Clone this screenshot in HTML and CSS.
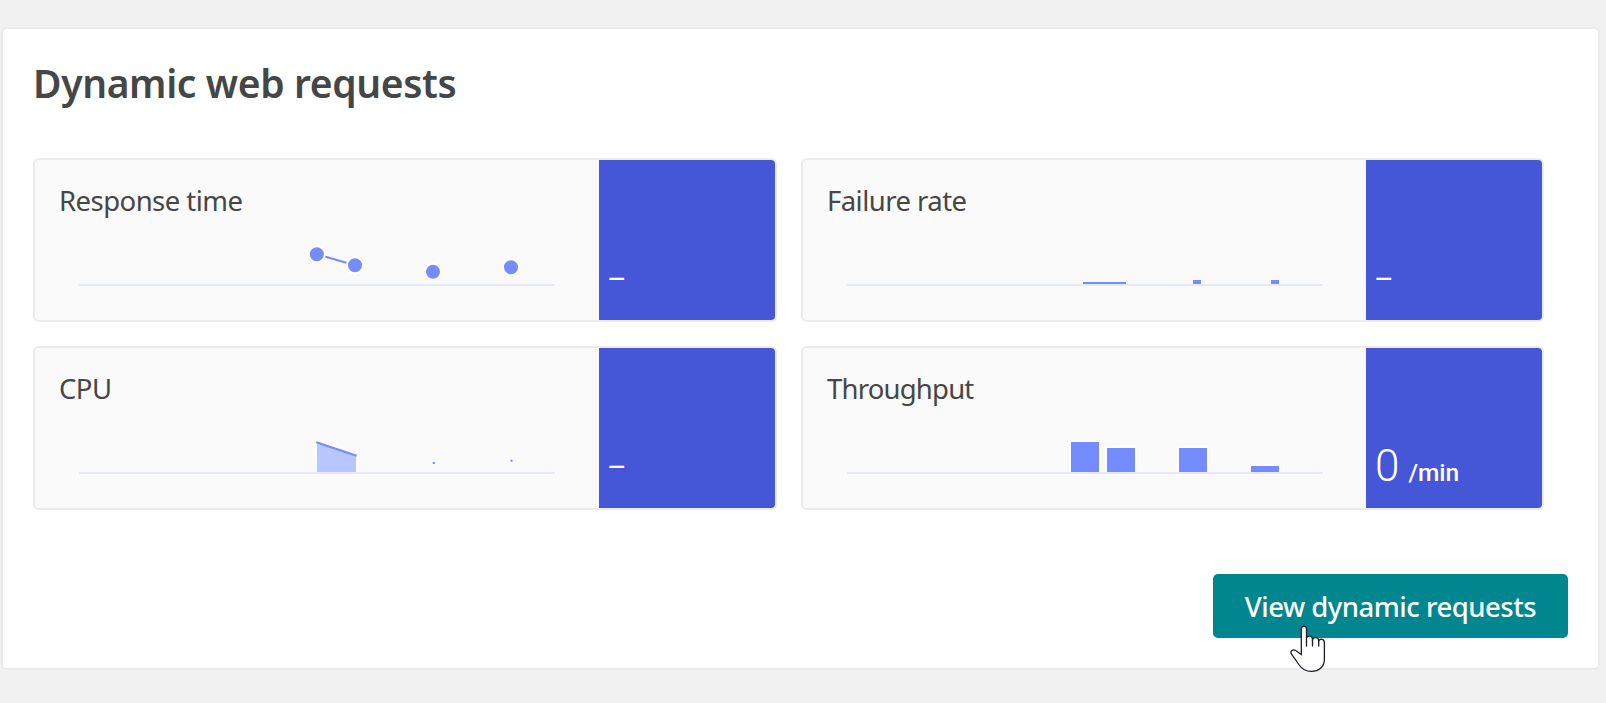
FILE: index.html
```html
<!DOCTYPE html>
<html lang="en">
<head>
<meta charset="utf-8">
<title>Dynamic web requests</title>
<link rel="stylesheet" href="styles.css">
</head>
<body>
<main class="card">
  <h1 class="card-title">Dynamic web requests</h1>
  <div class="tiles">
    <section class="tile">
      <div class="tile-main">
        <h2 class="tile-title">Response time</h2>
        <svg class="chart" viewBox="44 84 476 50">
          <path class="axis" d="M44 125H520"/>
          <path class="line" d="M282 94.2L320 105.3"/>
          <g class="dots">
            <circle cx="281.8" cy="94.2" r="8"/>
            <circle cx="320" cy="105.3" r="8"/>
            <circle cx="398" cy="111.8" r="8"/>
            <circle cx="476" cy="107.3" r="8"/>
          </g>
        </svg>
      </div>
      <div class="tile-value no-data"><span class="number">–</span></div>
    </section>
    <section class="tile">
      <div class="tile-main">
        <h2 class="tile-title">Failure rate</h2>
        <svg class="chart" viewBox="44 84 476 50">
          <path class="axis" d="M44 125H520"/>
          <path class="line" d="M280 123H323"/>
          <path class="fill" d="M390 120h8v4h-8zM468 120h8v4h-8z"/>
        </svg>
      </div>
      <div class="tile-value no-data"><span class="number">–</span></div>
    </section>
    <section class="tile">
      <div class="tile-main">
        <h2 class="tile-title">CPU</h2>
        <svg class="chart" viewBox="44 84 476 50">
          <path class="axis" d="M44 125H520"/>
          <path class="area" d="M282 94.5L321 107.5V124H282z"/>
          <path class="line" d="M281.3 94.3L321.7 107.7"/>
          <path class="fill" d="M397.8 114h2v2h-2zM475.5 111.7h2v2h-2z"/>
        </svg>
      </div>
      <div class="tile-value no-data"><span class="number">–</span></div>
    </section>
    <section class="tile">
      <div class="tile-main">
        <h2 class="tile-title tight">Throughput</h2>
        <svg class="chart" viewBox="44 84 476 50">
          <path class="halo" d="M266 92h32v32h-32zM302 98h32v26h-32zM374 98h32v26h-32zM446 116h32v8h-32z"/>
          <path class="axis" d="M44 125H520"/>
          <path class="fill" d="M268 94h28v30h-28zM304 100h28v24h-28zM376 100h28v24h-28zM448 118h28v6h-28z"/>
        </svg>
      </div>
      <div class="tile-value"><span class="number">0</span><span class="unit">/min</span></div>
    </section>
  </div>
  <div class="actions">
    <button class="button" type="button">View dynamic requests</button>
  </div>
</main>
<svg class="cursor" viewBox="0 0 36 48">
  <path d="M11.3 29.5V4.2C11.3 .2 16.5 .2 16.5 4.2V12.8C17.8 10.2 22.5 10.4 22.5 14.3C24 11.8 28.7 12.1 28.7 15.8C30.5 13.2 34.4 14 34.4 18V34.5C34.4 42 28.5 46.3 21.5 46.3C15.5 46.3 11.8 43.8 9.2 40L1.4 29C-.2 26.2 2.8 23.7 5.7 25.5Z"/>
  <path d="M16.5 12V21.5M22.5 14V21.5M28.7 15.5V21.5"/>
</svg>
</body>
</html>
```
FILE: styles.css
```css
* { box-sizing: border-box; }

body {
  margin: 0;
  padding: 27px 6px 0 1px;
  height: 703px;
  overflow: hidden;
  position: relative;
  background: #f1f1f1;
  color: #454646;
  font-family: "Noto Sans", sans-serif;
}

.card {
  height: 643px;
  padding: 29px 30px 30px 30px;
  border: 2px solid #ebebeb;
  border-radius: 6px;
  background: #fff;
}

.card-title {
  margin: 0;
  height: 100px;
  font-size: 39px;
  font-weight: 600;
  line-height: 50px;
  letter-spacing: -0.38px;
}

.tiles {
  display: grid;
  grid-template-columns: 744px 743px;
  grid-auto-rows: 164px;
  gap: 24px;
}

.tile {
  display: flex;
  overflow: hidden;
  border: 2px solid #ebebeb;
  border-radius: 6px;
  background: #fafafa;
}

.tile-main { flex: 1; }

.tile-title {
  margin: 0;
  padding: 23px 0 0 24px;
  height: 84px;
  font-size: 27.5px;
  font-weight: 400;
  line-height: 36px;
  letter-spacing: -0.54px;
}

.tile-title.tight { letter-spacing: -0.8px; }

.chart {
  display: block;
  width: 476px;
  height: 50px;
  margin-left: 44px;
  overflow: visible;
}

.axis { stroke: #e5e8ff; stroke-width: 2; }
.line { stroke: #748cff; stroke-width: 2; }
.fill { fill: #748cff; }
.area { fill: #b9c5ff; }
.halo { fill: #fff; }
.dots { fill: #748cff; stroke: #fff; stroke-width: 2; }

.tile-value {
  display: flex;
  align-items: baseline;
  gap: 9px;
  width: 176px;
  padding: 92px 0 0 9px;
  background: #4556d7;
  color: #fff;
  font-family: Roboto, sans-serif;
}

.number { font-size: 44px; font-weight: 300; line-height: 52px; }
.unit { font-size: 24.5px; font-weight: 500; }

.tile-value.no-data { padding: 93px 0 0 8px; }
.no-data .number { font-size: 30px; font-weight: 400; }

.actions {
  display: flex;
  justify-content: flex-end;
  margin-top: 64px;
}

.button {
  width: 355px;
  height: 64px;
  padding: 2px 0 0;
  border: 0;
  border-radius: 5px;
  background: #00868f;
  color: #fff;
  font: 500 27.5px/36px "Noto Sans", sans-serif;
  letter-spacing: -0.5px;
}

.cursor {
  position: absolute;
  left: 1290px;
  top: 625px;
  width: 36px;
  height: 48px;
  fill: #fff;
  stroke: #1b1b2c;
  stroke-width: 1.3;
}
```
